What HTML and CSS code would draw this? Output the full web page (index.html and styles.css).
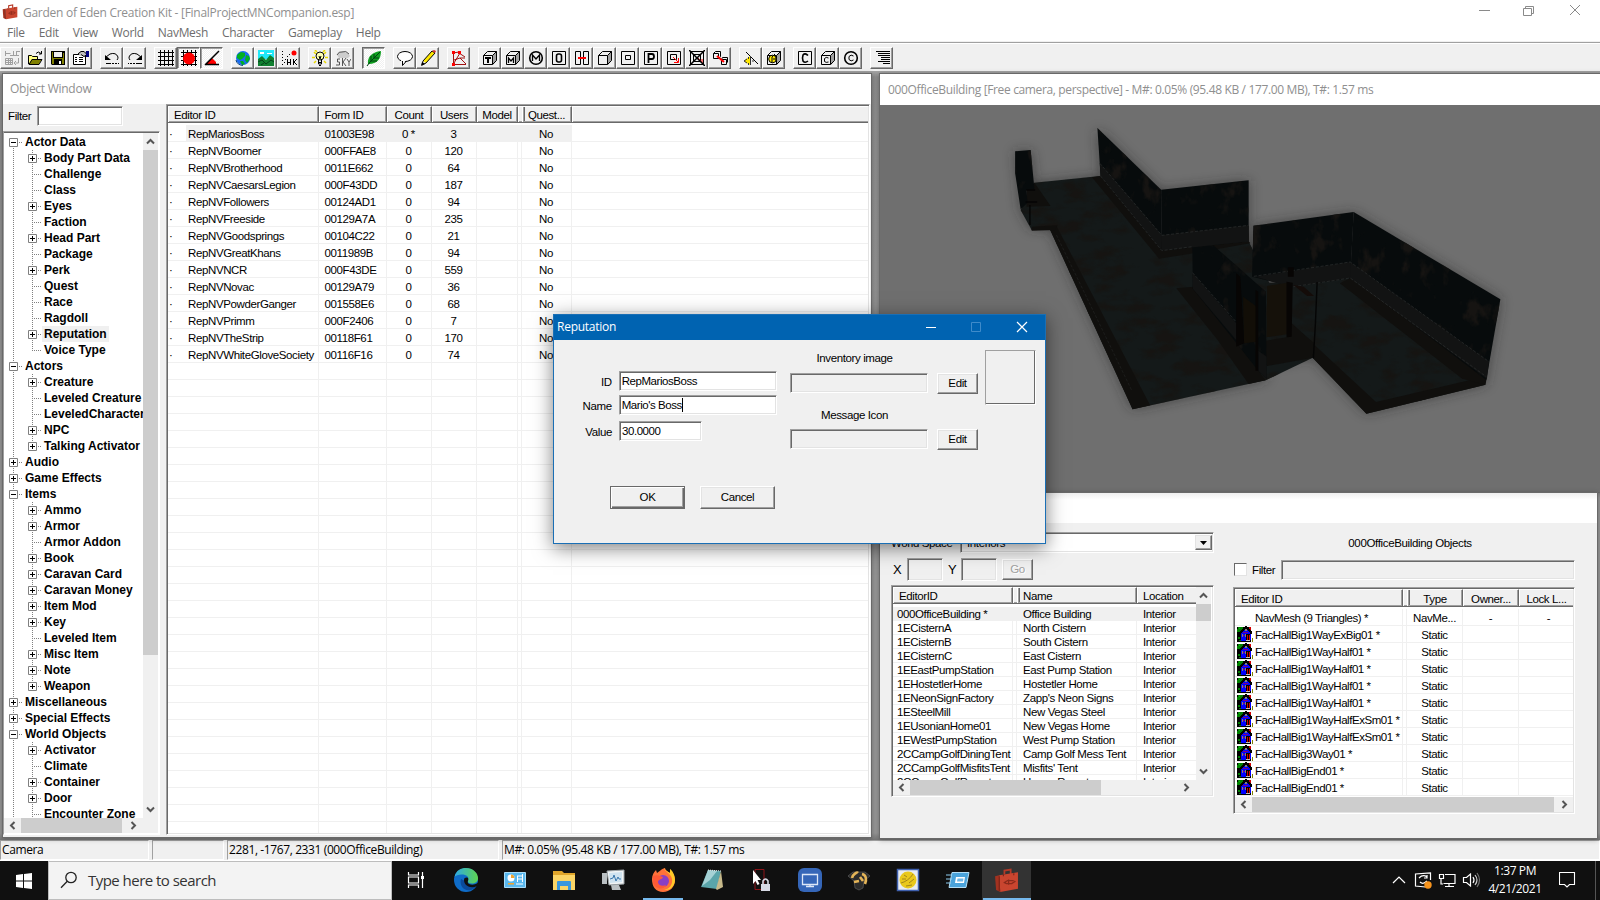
FILE: index.html
```html
<!DOCTYPE html>
<html lang="en">
<head>
<meta charset="utf-8">
<title>Garden of Eden Creation Kit</title>
<link rel="stylesheet" href="styles.css">
</head>
<body>
<div class="app">
  <header class="titlebar ui">
    <svg class="app-icon" width="16" height="16" viewBox="0 0 24 24"><use href="#suitcase"/></svg>
    <span class="app-title">Garden of Eden Creation Kit - [FinalProjectMNCompanion.esp]</span>
    <svg class="caption-buttons" width="110" height="22" viewBox="0 0 110 22" fill="none" stroke="#8a8a8a"><path d="M4 10.500h11M48.500 8.500h8v7h-8zM50.500 8.500v-2h8v7h-2M95 5l10 10M105 5l-10 10"/></svg>
  </header>
  <nav class="menu ui">
    <span>File</span><span>Edit</span><span>View</span><span>World</span><span>NavMesh</span><span>Character</span><span>Gameplay</span><span>Help</span>
  </nav>
  <div class="toolbar" id="toolbar"></div>

  <main class="mdi">
    <section class="window object-window">
      <h2 class="window-title ui">Object Window</h2>
      <div class="object-body">
        <aside class="tree-pane">
          <div class="filter-row"><span>Filter</span><span class="field"></span></div>
          <div class="tree-box">
            <div class="tree-main">
              <div class="tree" id="tree"></div>
              <div class="vscroll"><svg width="15" height="17"><use href="#up"/></svg><i class="thumb thumb-tree"></i><svg class="end" width="15" height="17"><use href="#down"/></svg></div>
            </div>
            <div class="hscroll"><svg width="17" height="15"><use href="#left"/></svg><i class="thumb thumb-tree-h"></i><svg class="tree-right" width="17" height="15"><use href="#right"/></svg></div>
          </div>
        </aside>
        <div class="list object-list">
          <div class="head cols-object"><b>Editor ID</b><b>Form ID</b><b class="c">Count</b><b class="c">Users</b><b class="c">Model</b><b></b><b class="c">Quest...</b><b></b></div>
          <div class="rows" id="objects"></div>
        </div>
      </div>
    </section>

    <section class="window render-window">
      <h2 class="window-title ui">000OfficeBuilding [Free camera, perspective] - M#: 0.05% (95.48 KB / 177.00 MB), T#: 1.57 ms</h2>
      <div class="viewport">
        <svg class="scene" width="540" height="320" viewBox="0 0 1568 960" preserveAspectRatio="none">
          <defs>
            <filter id="soft" x="-10%" y="-10%" width="120%" height="120%"><feGaussianBlur stdDeviation="18"/></filter>
            <filter id="grime" x="0" y="0" width="100%" height="100%" color-interpolation-filters="sRGB">
              <feTurbulence type="fractalNoise" baseFrequency="0.012 0.024" numOctaves="4" seed="6"/>
              <feColorMatrix values="0 0 0 0 0.085  0 0 0 0 0.080  0 0 0 0 0.070  0 4 0 0 -1.900"/>
              <feComposite in2="SourceGraphic" operator="in" result="n"/>
              <feMerge><feMergeNode in="SourceGraphic"/><feMergeNode in="n"/></feMerge>
            </filter>
            <filter id="peel" x="0" y="0" width="100%" height="100%" color-interpolation-filters="sRGB">
              <feTurbulence type="fractalNoise" baseFrequency="0.022 0.014" numOctaves="4" seed="11"/>
              <feColorMatrix values="0 0 0 0 0.085  0 0 0 0 0.078  0 0 0 0 0.070  0 5 0 0 -2.800"/>
              <feComposite in2="SourceGraphic" operator="in" result="n"/>
              <feMerge><feMergeNode in="SourceGraphic"/><feMergeNode in="n"/></feMerge>
            </filter>
          </defs>
          <path id="outline" filter="url(#soft)" fill="#222" opacity=".55" d="M102 124L147 120L158 218L350 198L341 54L526 239L780 211V394L794 404V347L1085 306L1511 568L1468 824L1122 911L966 743L834 768L829 811L443 898L203 358L150 360L118 300Z"/>
          <g filter="url(#grime)">
            <path fill="#141919" d="M158 218L350 198L526 420L780 394L830 500L966 743L829 811L443 898L203 358L150 360L118 300Z"/>
            <path fill="#141919" d="M830 520L1075 500L1468 824L1122 911L966 743L834 768Z"/>
          </g>
          <g fill="#100f0d">
            <path d="M325 202L350 198L535 420L780 394L785 400L620 430L520 446Z"/>
            <path d="M203 358L222 348L494 886L443 898Z"/>
            <path d="M570 535L620 530L750 700L829 811L780 822L690 690Z"/>
            <path d="M966 700L1150 876L1440 806L1468 824L1122 911L966 743Z"/>
            <path d="M1045 520L1075 505L1472 800L1468 824L1400 806Z"/>
            <path d="M158 218L205 288L135 290L135 240Z"/>
            <path d="M752 706L900 680L905 640L970 700L966 743L834 768Z"/>
            <path d="M150 350L225 346L218 360L150 362Z"/>
          </g>
          <g filter="url(#peel)" fill="#070b0c">
            <path d="M102 124L147 120L158 236L135 240L138 278L118 298L102 190Z"/>
            <path d="M341 54L526 239L528 422L350 198Z"/>
            <path d="M526 239L780 211V394L528 422Z"/>
            <path d="M794 347L1085 306L1075 505L910 530L790 500Z"/>
            <path d="M1085 306L1511 568L1470 810L1075 500Z"/>
            <path d="M616 350L830 545L832 806L808 782L745 700L618 536Z"/>
          </g>
          <g fill="#121313">
            <path d="M348 160L528 376V422L350 198Z"/><path d="M528 376L780 346V394L528 422Z"/>
            <path d="M800 500L1075 456V504L905 532Z"/><path d="M1075 456L1478 755L1472 806L1075 504Z"/>
            <path d="M617 488L744 640V690L618 536Z"/><path d="M808 722L832 740V806L808 782Z"/>
          </g>
          <g fill="none" stroke="#2c2f2f" stroke-width="2" stroke-dasharray="9 5">
            <path d="M348 160L528 376L780 346M350 198L528 422L616 410M795 499L1075 456L1478 755M910 530L1075 504L1470 800M617 488L744 636"/>
            <path d="M222 375L440 840" opacity=".6"/>
          </g>
          <path fill="#15110a" d="M834 528L895 518V672L832 682Z"/><path fill="#120e07" d="M764 560L804 590V695L766 700Z"/>
          <path fill="#070504" d="M744 490L756 500L767 700L744 710ZM890 515L908 518L905 680L890 682ZM894 472H911V500H894ZM800 540L808 545V782H800Z"/>
          <path fill="#140c09" d="M910 525L940 530L970 558L950 558Z"/>
          <path fill="none" stroke="#050505" stroke-width="4" d="M979 516L974 640L968 745M134 240H160M132 276H166M145 285V345"/>
        </svg>
      </div>
    </section>

    <section class="window cell-window">
      <div class="window-title"></div>
      <div class="cell-body">
        <div class="cell-left">
          <div class="space-row"><span>World Space</span><div class="combo"><span>Interiors</span><i class="combo-btn"><svg width="7" height="4"><path d="M0 0h7L3.500 4z"/></svg></i></div></div>
          <div class="xy-row"><span>X</span><span class="field off"></span><span class="y-label">Y</span><span class="field off"></span><span class="btn go">Go</span></div>
          <div class="list cell-list">
            <div class="cell-split">
              <div class="cell-table">
                <div class="head cols-cell"><b>EditorID</b><b></b><b>Name</b><b>Location</b></div>
                <div class="rows" id="cells"></div>
              </div>
              <div class="vscroll"><svg width="15" height="17"><use href="#up"/></svg><i class="thumb thumb-cell"></i><svg class="end" width="15" height="17"><use href="#down"/></svg></div>
            </div>
            <div class="hscroll"><svg width="17" height="15"><use href="#left"/></svg><i class="thumb thumb-cell-h"></i><svg class="cell-right-arrow" width="17" height="15"><use href="#right"/></svg></div>
          </div>
        </div>
        <div class="cell-right">
          <div class="refs-title">000OfficeBuilding Objects</div>
          <div class="refs-filter"><i class="check"></i><span>Filter</span><span class="field off"></span></div>
          <div class="list refs-list">
            <div class="head cols-refs"><b>Editor ID</b><b></b><b class="c">Type</b><b class="c">Owner...</b><b class="c">Lock L...</b></div>
            <div class="rows" id="refs"></div>
            <div class="hscroll"><svg width="17" height="15"><use href="#left"/></svg><i class="thumb thumb-refs-h"></i><svg class="end" width="17" height="15"><use href="#right"/></svg></div>
          </div>
        </div>
      </div>
    </section>
  </main>

  <footer class="status ui"><span>Camera</span><span></span><span>2281, -1767, 2331 (000OfficeBuilding)</span><span>M#: 0.05% (95.48 KB / 177.00 MB), T#: 1.57 ms</span></footer>

  <div class="taskbar ui">
    <div class="start"><svg width="18" height="18" viewBox="0 0 18 18" fill="#fff"><path d="M1 3l7-1v6.500H1zM9 2l8-1v7.500H9zM1 9.500h7V16l-7-1zM9 9.500h8V17l-8-1z"/></svg></div>
    <div class="search"><svg width="18" height="18" viewBox="0 0 18 18" fill="none" stroke="#222" stroke-width="1.300"><circle cx="11" cy="6.500" r="5.200"/><path d="M7.300 10.300L1 16.800"/></svg><span>Type here to search</span></div>
    <div class="apps">
      <span><svg width="24" height="24" viewBox="0 0 24 24" fill="none" stroke="#fff" stroke-width="1.200"><path d="M3.500 4v3h10V4M3.500 20v-3h10v3M3.500 9h10v6h-10zM17.500 4v16"/><path stroke-width="3" d="M17.500 8v3"/></svg></span>
      <span><svg width="26" height="26" viewBox="0 0 26 26"><defs><linearGradient id="eg" x1="0" y1="0" x2="1" y2="0"><stop offset="0" stop-color="#2ea9e6"/><stop offset="1" stop-color="#5fd44f"/></linearGradient></defs><circle cx="13" cy="13" r="12" fill="#0f6cc8"/><path fill="#0b4a9b" d="M8 12c-2 6 3 13 10 11 3-1 5-3 6-5-4 2-9 2-10-3z"/><path fill="#101010" d="M11 13c0-3 4-3 4.500-1 .3 1.500-1.500 2.500-.5 4 1.500 2 6 2.500 9.500 0l1.500-2-2 5c-6 3-13 0-13-6z"/><path fill="url(#eg)" d="M1.500 10C3 3 8 1 13 1c7 0 12 5 12 10 0 4-3 5.500-6 5.500-3 0-4.500-1-4-2.500 1-1 1-5-3-6C8 7 3 8 1.500 10z"/></svg></span>
      <span><svg width="24" height="24" viewBox="0 0 24 24"><path fill="#58b7ee" stroke="#a8dcf8" d="M1.500 4.500h21v15h-21z"/><circle cx="8" cy="10" r="3.500" fill="#fff"/><path fill="#f2a530" d="M8 10V6.500a3.500 3.500 0 0 1 3.500 3.500zM5 15h6v1.500H5z"/><path fill="none" stroke="#fff" d="M14 8h6M14 11h6M13 16h7M14.500 8v6M19.500 6v8"/></svg></span>
      <span><svg width="24" height="24" viewBox="0 0 24 24"><path fill="#e0a52a" d="M1 3h9l2 2h11v4H1z"/><path fill="#fbd566" d="M1 7h22v15H1z"/><path fill="#3a97dd" d="M5 22v-8q0-1 1-1h12q1 0 1 1v8h-3v-4H8v4z"/></svg></span>
      <span><svg width="24" height="24" viewBox="0 0 24 24"><path fill="#b9bfc2" d="M1 5h5v11H1zM10 17h8l2 5h-9z"/><path fill="#f1f4f5" stroke="#9aa2a6" d="M6 3l17-1v14l-15 1z"/><path fill="#cfe3f0" d="M8 5l13-1v10l-12 1z"/><path fill="none" stroke="#3a78ad" d="M9 11l3-1 1-3 2 6 2-4 1 2h2"/></svg></span>
      <span class="running"><svg width="26" height="26" viewBox="0 0 26 26"><path fill="#ff7139" d="M2 12C2 8 4 5 6 3l1 3 4-3c1-1 3-2 4-2 0 2 2 3 5 5l1-2c3 3 4 6 4 9 0 7-5 12-12 12S2 20 2 12z"/><path fill="#ffca28" d="M14 1c0 3 7 5 8 11s-3 10-8 11c7 1 11-5 11-10S22 3 20 2l0 4C18 5 15 3 14 1z"/><circle cx="13" cy="14" r="6" fill="#8a3fc4"/><path fill="#ff5a36" d="M3 9c4-2 7 0 10 1-1 3-5 2-5 5s4 5 8 3c-2 6-12 4-13-3z"/></svg></span>
      <span><svg width="24" height="24" viewBox="0 0 24 24"><path fill="#5aa5aa" d="M8 2l13 1-4 18-16-2z"/><path fill="#a5d2d5" d="M8 2l9 1-7 9-8 6z"/><path fill="#c7b98a" d="M21 3l2 16-6 3-1-1z"/><path stroke="#e9e9e9" stroke-dasharray="1 1" d="M8 2l13 1"/></svg></span>
      <span><svg width="24" height="24" viewBox="0 0 24 24"><path fill="none" stroke="#8e1418" d="M6 1.500h9v20H6z"/><path fill="#fff" d="M4 2l8 10-3.500 0 2 4-2 1-2-4L4 16z"/><path fill="#d7d9e4" d="M12 16h9v7h-9z"/><path fill="none" stroke="#d7d9e4" stroke-width="1.600" d="M14 16v-3q2.500-4 5 0v3"/></svg></span>
      <span><svg width="26" height="26" viewBox="0 0 26 26"><rect x="1" y="1" width="24" height="24" rx="6" fill="#3566b8"/><path fill="none" stroke="#dce6f7" stroke-width="1.300" d="M5.500 7.500h15v10h-15zM13 17v2M9 19.500h8"/></svg></span>
      <span><svg width="24" height="24" viewBox="0 0 24 24"><path fill="#2c2c2c" stroke="#666" stroke-width=".6" d="M1 8l5-4h12l5 4-6 5-1 7-4 2-4-2-1-7z"/><path fill="none" stroke="#e5b558" stroke-width="2.600" d="M5 10c1-4 5-6 6-5M7 14l5-1M15 6c4 1 5 5 3 10M13 9l3 4"/></svg></span>
      <span><svg width="24" height="24" viewBox="0 0 24 24"><path fill="#e7ebf2" stroke="#3f60ae" stroke-width="1.500" d="M1.500 1.500h21v21h-21z"/><circle cx="12" cy="12" r="8.500" fill="#e9c81d"/><path fill="none" stroke="#a4861a" d="M5 15c4-1 9-4 12-9M8 7l3 2M6 11h4M13 15l5-4M10 18l6-1"/></svg></span>
      <span><svg width="24" height="24" viewBox="0 0 24 24"><path fill="#4aa3db" stroke="#b4def5" d="M6 4.500h17l-3 15H3z"/><path fill="#fff" d="M10 9h9l-1 6H9z"/><path fill="#6db6e6" d="M11.500 10.500h6l-.5 3h-6z"/><path stroke="#8fcdf0" d="M0 7h6M0 11h6M0 15h5"/></svg></span>
      <span class="running active"><svg width="25" height="25" viewBox="0 0 24 24"><g id="suitcase"><path fill="none" stroke="#b53a28" stroke-width="1.700" d="M10 6V2.500l6-1V6"/><path fill="#c9452f" d="M5 7l18-3v16L6 23z"/><path fill="#a23220" d="M1 8l4-1 1 16-4-2z"/><path fill="none" stroke="#7b2115" d="M5 8v14M9 6v2M19 5v2"/><path fill="none" stroke="#8a2a1b" stroke-width="1.200" d="M10 14l3-2 5 0 2 1-3 2-5 0zM14 11v5"/></g></svg></span>
    </div>
    <div class="tray">
      <svg width="100" height="24" viewBox="0 0 100 24" fill="none" stroke="#fff" stroke-width="1.200"><path d="M1 15l6-6 6 6M38.500 12V5l-15 1v12l10 1M27 10q4-4 8-1M35 7v3h-3M35 13q-4 4-7 1M47.500 6.500v4h4v-4zM49 10v6h2M53 6.500h10v9H51.500M57 16v3M53 18.500h9M71.500 9.500h3l4-3.500v12l-4-3.500h-3zM81 9q2 3 0 6"/><path d="M83 7q4 5 0 10" opacity=".8"/><path d="M85 5q5 7 0 14" opacity=".4"/><circle cx="36" cy="17" r="3.700" fill="#f7941d" stroke="none"/></svg>
    </div>
    <div class="clock"><span>1:37 PM</span><span>4/21/2021</span></div>
    <div class="notice"><svg width="17" height="17" viewBox="0 0 17 17" fill="none" stroke="#fff" stroke-width="1.100"><path d="M.5 1.500h15v12h-5l-2.500 2.500-2.500-2.500h-5z"/></svg></div>
  </div>

  <section class="dialog">
    <header class="dialog-title ui"><span>Reputation</span><svg width="110" height="24" viewBox="0 0 110 24" fill="none" stroke="#fff"><path d="M3 12.500h10"/><path stroke="#3f8bca" d="M48.500 7.500h9v9h-9z"/><path stroke-width="1.200" d="M94 7l10 10M104 7L94 17"/></svg></header>
    <div class="dialog-body">
      <div class="d-left">
        <div class="d-row"><label>ID</label><span class="field">RepMariosBoss</span></div>
        <div class="d-row name"><label>Name</label><span class="field">Mario's Boss<i class="caret"></i></span></div>
        <div class="d-row value"><label>Value</label><span class="field">30.0000</span></div>
        <div class="d-actions"><span class="btn ok">OK</span><span class="btn">Cancel</span></div>
      </div>
      <div class="d-mid">
        <div class="d-caption">Inventory image</div>
        <div class="d-pick"><span class="field off"></span><span class="btn">Edit</span></div>
        <div class="d-caption lower">Message Icon</div>
        <div class="d-pick"><span class="field off"></span><span class="btn">Edit</span></div>
      </div>
      <div class="d-preview"></div>
    </div>
  </section>
</div>

<svg width="0" height="0" class="defs">
  <defs>
    <path id="up" d="M4 10.500l3.500-3.500 3.500 3.500" fill="none" stroke="#555" stroke-width="2"/>
    <path id="down" d="M4 6.500l3.500 3.500 3.500-3.500" fill="none" stroke="#555" stroke-width="2"/>
    <path id="left" d="M10.500 4L7 7.500 10.500 11" fill="none" stroke="#555" stroke-width="2"/>
    <path id="right" d="M6.500 4L10 7.500 6.500 11" fill="none" stroke="#555" stroke-width="2"/>
    <g id="house" shape-rendering="crispEdges">
      <path fill="#000" d="M0 1h14v15H0z"/><path fill="#008000" d="M1 1h5v2H1zM0 3h5v3H0zM1 11h2v2H1zM2 14h3v1H2z"/>
      <path fill="#00c000" d="M2 2h1v1H2z"/><path fill="#d00000" d="M12 1h2v4h-2z"/><path fill="#000" d="M3 6l5-6h1l6 6v2H3z"/>
      <path fill="#0000ff" d="M5 6l3-3h1l4 3v2h1v6h-1v-6H9v7H4V7h1z"/><path fill="#808080" d="M8 3h2v2H8zM5 8h1v3H5zM8 8h1v3H8z"/><path fill="#800080" d="M6 6h5v1H6zM6 9h2v1H6z"/>
      <path fill="#d00000" d="M10 9h3v5h-3z"/><path fill="#000" d="M11 9h1v5h-1z"/><path fill="#c0c0c0" d="M9 14h4v1H9z"/><path fill="#808000" d="M15 12h1v4h-1z"/>
    </g>
  </defs>
</svg>
<script src="app.js"></script>
</body>
</html>
```

FILE: styles.css
```css
* { box-sizing: border-box; }
body { margin: 0; background: #f0f0f0; overflow: hidden; }
b, h2 { font-weight: normal; margin: 0; }
i { font-style: normal; }
svg { display: block; flex: none; }
.defs { position: absolute; }

.app {
  position: relative;
  display: flex;
  flex-direction: column;
  width: 1600px;
  height: 900px;
  overflow: hidden;
  font: 11.5px "Liberation Sans", Arial, sans-serif;
  letter-spacing: -0.38px;
  color: #000;
  white-space: nowrap;
}
.ui { font-family: "Open Sans", "Noto Sans", sans-serif; font-size: 12px; letter-spacing: -0.27px; }

/* Main caption and menu */
.titlebar { display: flex; align-items: center; height: 22px; flex: none; background: #fff; color: #8f8f8f; padding-left: 2px; }
.app-icon { margin-top: 1px; }
.app-title { margin-left: 5px; margin-top: 2px; }
.caption-buttons { margin-left: auto; margin-right: 15px; }
.menu { display: flex; height: 19px; flex: none; background: #fff; color: #6d6d6d; padding-left: 7px; gap: 14px; line-height: 21px; letter-spacing: -0.31px; }

/* Toolbar */
.toolbar { display: flex; gap: 8px; height: 30px; flex: none; padding-top: 4px; background: #f0f0f0; border-top: 1px solid #f0f0f0; box-shadow: inset 0 1px #a0a0a0, inset 0 2px #fff; }
.tool-group { display: flex; }
.tool {
  width: 23px; height: 22px; padding: 2px 0 0 3px; margin-top: 1px;
  border: 1px solid; border-color: #fff #696969 #696969 #fff;
  box-shadow: inset -1px -1px #a0a0a0;
}
.tool svg { margin-left: -0.5px; }
.tool.down { border-color: #696969 #fff #fff #696969; box-shadow: inset 1px 1px #a0a0a0; background: repeating-conic-gradient(#fff 0 25%, #f0f0f0 0 50%) 0 0 / 2px 2px; }

/* Child windows */
.mdi { position: relative; height: 769px; flex: none; background: linear-gradient(#a5a5a5, #8e8e8e 6px, #989898 50%, #989898 762px, #777); }
.window { position: absolute; display: flex; flex-direction: column; background: #f0f0f0; border: 1px solid #696969; box-shadow: 0 1px 5px rgba(0, 0, 0, .3); overflow: hidden; }
.window-title { height: 30px; flex: none; background: #fff; color: #8f8f8f; padding-left: 7px; line-height: 30px; }
.object-window { left: 2px; top: 2px; width: 870px; height: 765px; }
.render-window { left: 879px; top: 2px; width: 730px; height: 420px; }
.render-window .window-title { height: 31px; line-height: 31px; letter-spacing: -0.355px; padding-left: 8px; }
.cell-window { left: 879px; top: 421px; width: 719px; height: 347px; }
.cell-window .window-title { background: linear-gradient(#eee, #fff 7px); }

.field { display: block; background: #fff; border: 1px solid; border-color: #a0a0a0 #fff #fff #a0a0a0; box-shadow: inset 1px 1px #696969, inset -1px -1px #e3e3e3; }
.field.off { background: #f0f0f0; }
.btn { display: block; text-align: center; background: #f0f0f0; border: 1px solid; border-color: #fff #696969 #696969 #fff; box-shadow: inset -1px -1px #a0a0a0, inset 1px 1px #e3e3e3; }

/* Scroll bars */
.vscroll { width: 15px; flex: none; display: flex; flex-direction: column; background: #f0f0f0; }
.hscroll { height: 15px; flex: none; display: flex; background: #f0f0f0; }
.end { margin-top: auto; }
.hscroll .end { margin-top: 0; margin-left: auto; }
.tree-right { margin-left: 3px; }
.cell-right-arrow { margin-left: 77px; }
.thumb { display: block; background: #cdcdcd; flex: none; }
.thumb-tree { height: 505px; }
.thumb-tree-h { width: 101px; }
.thumb-cell { height: 17px; }
.thumb-cell-h { width: 191px; }
.thumb-refs-h { width: 302px; }

/* Object window */
.object-body { display: flex; flex: 1; min-height: 0; }
.tree-pane { width: 157px; display: flex; flex-direction: column; }
.filter-row { display: flex; align-items: center; height: 27px; padding: 0 37px 4px 5px; flex: none; }
.filter-row .field { width: 86px; height: 20px; margin-left: auto; }
.tree-box { flex: 1; min-height: 0; margin-bottom: 2px; display: flex; flex-direction: column; background: #fff; border: 1px solid; border-color: #a0a0a0 #fff #fff #a0a0a0; box-shadow: inset 0 1px #696969; padding: 1px 1px 1px 0; }
.tree-main { display: flex; flex: 1; min-height: 0; }
.tree { width: 139px; overflow: hidden; font-weight: bold; font-size: 12px; letter-spacing: 0; padding-top: 1px; }
.node {
  --v: repeating-linear-gradient(#808080 0 1px, transparent 1px 2px);
  --h: repeating-linear-gradient(90deg, #808080 0 1px, transparent 1px 2px);
  display: flex; align-items: center; height: 16px; padding-left: 5px;
  background: var(--v) 9px 0 / 1px 100% no-repeat, var(--h) 15px 8px / 4px 1px no-repeat;
}
.node.first { background-position: 9px 8px, 15px 8px; }
.node.child { padding-left: 24px; background: var(--v) 9px 0 / 1px 100% no-repeat, var(--v) 28px 0 / 1px 100% no-repeat, var(--h) 28px 8px / 9px 1px no-repeat; }
.node.child.last { background-size: 1px 100%, 1px 8px, 9px 1px; }
.node svg, .node .none { width: 9px; height: 9px; flex: none; }
.node span { margin-left: 5px; padding: 0 2px; line-height: 16px; }
.node.sel span { background: #f0f0f0; }

/* Lists */
.list { display: flex; flex-direction: column; background: #fff; border: 1px solid; border-color: #a0a0a0 #fff #fff #a0a0a0; box-shadow: inset 1px 1px #696969, inset -1px -1px #e3e3e3; padding: 1px; overflow: hidden; }
.head { display: grid; flex: none; height: 17px; background: #f0f0f0; border-bottom: 1px solid #696969; }
.head b { line-height: 16px; padding-left: 5px; overflow: hidden; border-left: 1px solid #fff; border-top: 1px solid #fff; border-right: 1px solid #696969; box-shadow: inset -1px -1px #a0a0a0; }
.head b.c, .row .c { padding-left: 0; text-align: center; }
.head b:last-child { border-right: 0; box-shadow: inset 0 -1px #a0a0a0; }
.rows { flex: 1; min-height: 0; overflow: hidden; padding-top: 2px; }
.row { display: grid; height: 17px; }
.row span { border-right: 1px solid #f0f0f0; border-bottom: 1px solid #f0f0f0; line-height: 18px; overflow: hidden; display: block; }
.row span:last-child { border-right: 0; }

.object-list { flex: 1; margin: 0 1px 2px 6px; }
.cols-object { grid-template-columns: 150.500px 68px 45px 45px 41px 4px 50px 1fr; }
.object-list .row span:first-child { display: flex; padding-left: 1px; }
.object-list .row i { width: 19px; flex: none; }
.object-list .row span:nth-child(2) { padding-left: 6px; }
.object-list .sel { background: linear-gradient(#f0f0f0, #f0f0f0) 18px 0 / 385px 17px no-repeat; }

/* Cell view */
.cell-body { display: flex; flex: 1; min-height: 0; padding-left: 11px; }
.cell-left { width: 323px; padding-top: 9px; }
.space-row { display: flex; align-items: center; justify-content: space-between; height: 21px; }
.combo { width: 254px; height: 21px; display: flex; justify-content: space-between; padding: 2px 1px 2px 2px; background: #fff; border: 1px solid; border-color: #a0a0a0 #fff #fff #a0a0a0; box-shadow: inset 1px 1px #696969, inset -1px -1px #e3e3e3; }
.combo span { padding-left: 4px; line-height: 17px; }
.combo-btn { width: 17px; background: #f0f0f0; border: 1px solid; border-color: #e3e3e3 #696969 #696969 #e3e3e3; box-shadow: inset -1px -1px #a0a0a0; display: flex; align-items: center; justify-content: center; }
.xy-row { display: flex; align-items: center; height: 22px; margin-top: 5px; padding-left: 2px; }
.xy-row .field { width: 36px; height: 23px; margin-left: 5px; }
.xy-row span:first-child { width: 9px; font-size: 13px; }
.y-label { margin-left: 5px; width: 8px; font-size: 13px; }
.go { width: 31px; height: 21px; line-height: 19px; margin-left: 5px; color: #a0a0a0; text-shadow: 1px 1px #fff; }
.cell-list { width: 323px; height: 212px; margin-top: 5px; }
.cell-list .head { height: 17px; }
.cell-list .head b { line-height: 17px; }
.cell-split { display: flex; flex: 1; min-height: 0; }
.cell-table { width: 303px; display: flex; flex-direction: column; }
.cols-cell { grid-template-columns: 120px 4px 120px 1fr; }
.cell-list .rows { padding-top: 3px; }
.cell-list .row { height: 14px; }
.cell-list .row span { line-height: 14px; padding-left: 6px; }
.cell-list .row span:first-child { padding-left: 4px; }
.cell-list .row span:nth-child(2) { padding: 0; }
.cell-list .row.sel { background: #f0f0f0; }

.cell-right { width: 342px; margin-left: 19px; padding-top: 9px; }
.refs-title { text-align: center; line-height: 22px; padding-left: 12px; height: 27px; letter-spacing: -0.35px; }
.refs-filter { display: flex; align-items: center; height: 21px; padding-left: 1px; }
.check { width: 13px; height: 13px; background: #fff; border: 1px solid; border-color: #696969 #e3e3e3 #e3e3e3 #696969; }
.refs-filter span { margin-left: 5px; }
.refs-filter .field { width: 294px; height: 20px; margin-left: auto; }
.refs-list { height: 227px; margin-top: 7px; }
.refs-list .head { height: 18px; }
.refs-list .head b { line-height: 18px; }
.cols-refs { grid-template-columns: 168px 4px 56px 56px 1fr; }
.refs-list .row span:first-child { display: flex; padding-left: 2px; gap: 1px; letter-spacing: -0.45px; }
.refs-list .row svg { width: 17px; height: 17px; }
.refs-list .row .c:last-child { padding-left: 5px; }
.cell-right .hscroll { margin-top: 1px; }

/* Status bar */
.status { display: flex; gap: 3px; height: 21px; flex: none; background: #f0f0f0; border-bottom: 1px solid #fff; letter-spacing: -0.39px; }
.status span { border: 1px solid; border-color: #a0a0a0 #fff #fff #a0a0a0; line-height: 18px; padding-left: 1px; }
.status span:nth-child(1) { width: 149px; }
.status span:nth-child(2) { width: 72px; }
.status span:nth-child(3) { width: 272px; }
.status span:nth-child(4) { flex: 1; }

/* Taskbar */
.taskbar { display: flex; flex: 1; background: #101010; color: #fff; }
.start { width: 48px; display: flex; align-items: center; justify-content: center; }
.search { width: 344px; background: #f3f3f3; border: 1px solid #bdbdbd; color: #333; display: flex; align-items: center; padding: 0 0 2px 11px; font-size: 15px; letter-spacing: -0.53px; }
.search span { margin-left: 10px; }
.apps { display: flex; }
.apps span { width: 49.200px; display: flex; align-items: center; justify-content: center; padding-bottom: 1px; }
.apps .running { background: linear-gradient(#76b9ed, #76b9ed) center bottom / 40px 2px no-repeat; }
.apps .active { background: linear-gradient(#76b9ed, #76b9ed) center bottom / 48px 2px no-repeat, #333; }
.tray { margin-left: auto; display: flex; align-items: center; padding-bottom: 2px; }
.clock { width: 72px; margin-left: -13px; margin-right: 8px; text-align: center; line-height: 18px; padding-top: 1px; display: flex; flex-direction: column; letter-spacing: -0.4px; }
.notice { width: 37px; margin-right: 4px; border-right: 1px solid #555; padding: 10px 0 0; }

/* Render view */
.viewport { flex: 1; background: #6f6f6f; padding: 5px 0 0 100px; }
.scene { overflow: visible; }

/* Reputation dialog */
.dialog { position: absolute; left: 553px; top: 314px; width: 493px; height: 230px; background: #f0f0f0; border: 1px solid #1a6fb5; box-shadow: 0 4px 18px rgba(0, 0, 0, .5); }
.dialog-title { display: flex; justify-content: space-between; height: 25px; background: #0063b1; color: #fff; line-height: 24px; padding: 0 12px 0 3px; letter-spacing: -0.25px; }
.dialog-body { display: flex; height: 203px; }
.d-left { width: 223px; padding-top: 31px; }
.d-row { display: flex; height: 20px; }
.d-row label { width: 58px; margin-right: 7px; text-align: right; padding-top: 5px; }
.d-row .field { width: 159px; height: 20px; line-height: 18px; padding-left: 2px; display: flex; letter-spacing: -0.45px; }
.d-row.name { margin-top: 4px; }
.d-row.value { margin-top: 6px; }
.d-row.value .field { width: 83px; }
.caret { width: 1px; height: 14px; background: #000; margin-top: 2px; }
.d-actions { display: flex; gap: 15px; margin: 45px 0 0 56px; }
.d-actions .btn { width: 75px; height: 23px; line-height: 21px; }
.btn.ok { border-color: #696969; box-shadow: inset 1px 1px #fff, inset -1px -1px #696969, inset -2px -2px #a0a0a0; }
.d-mid { width: 189px; margin-left: 13px; padding-top: 10px; }
.d-caption { width: 129px; text-align: center; height: 23px; line-height: 17px; }
.d-caption.lower { line-height: 19px; }
.d-pick { display: flex; gap: 9px; height: 33px; }
.d-pick .field { width: 138px; height: 20px; }
.d-pick .btn { width: 41px; height: 21px; line-height: 18px; }
.d-preview { width: 51px; height: 55px; margin: 10px 0 0 6px; border: 1px solid; border-color: #a0a0a0 #fff #fff #a0a0a0; box-shadow: inset -1px -1px #696969; }
```

FILE: app.js
```js
const el = (id) => document.getElementById(id);

// Toolbar: [pressed, 16x16 drawing]
const cube = '<path fill="#a0a0a0" d="M11 5l4-4v9l-4 5z"/><path fill="#f0f0f0" stroke="#000" d="M1.500 5.500h9v9h-9z"/><path fill="none" stroke="#000" d="M1.500 5.500l4-4h9v9l-4 4M10.500 5.500l4-4"/>';
const box = '<path fill="none" stroke="#000" d="M1.500 1.500h13v13h-13z"/>';
const ring = '<circle cx="8" cy="8" r="6.300" fill="none" stroke="#000" stroke-width="1.600"/>';
const k = (d, c = '#000', w = 1) => `<path fill="none" stroke="${c}" stroke-width="${w}" d="${d}"/>`;
const f = (d, c = '#000') => `<path fill="${c}" d="${d}"/>`;
const grid = k('M0 2.500h16M0 6.500h16M0 10.500h16M0 14.500h16M2.500 0v16M6.500 0v16M10.500 0v16M14.500 0v16');
const groups = [
  [
    [0, k('M1.500 3.500h5M1.500 1v5M6 5.500h9M9.500 1v4M12 1.500h4M12.500 1v4M1.500 8.500h7v6h-7zM1 10.500h8M1 12.500h8M4.500 8v7M6.500 8v7M14.500 8v5h-3M12 11l-2 2 2 2', '#a0a0a0')],
    [0, f('M1 5h4l1 1h5v3H5l-3 5H1z', '#ffff80') + f('M5 9h10l-3 5H2z', '#808000') + k('M1.500 14V5.500h3l1 1h5V9M2 14.500h10l3-5H5l-3 5M9 3.500q2-3 5 0M14.500 1v3H12')],
    [0, f('M1 1h14v14H2l-1-1z') + f('M2 2h1v11H2zM13 3h1v11h-1zM3 8h10v1H3z', '#808000') + f('M4 2h8v5H4z', '#f0f0f0') + f('M9 11h2v3H9z', '#fff') + f('M2 9h2v5H2zM12 9h2v5h-2z', '#808000')],
    [0, f('M1 5h11v10H1z', '#fff') + k('M.5 4.500h12v10H.5zM2 7.500h2M6 7.500h4M2 9.500h2M6 9.500h4M2 11.500h2M6 11.500h4') + f('M5 3l3-2h4l2 3-3 3-2-2-2 1z', '#c0c0c0') + k('M5 4l3-2.500h3l3 3-3 2-3-2') + f('M13 1h3v6h-3z', '#000080')],
  ],
  [
    [0, k('M2 9.500q-1-3 4-5.500 6-2 8 3 0 2-1 3') + f('M1 5v5h6z') + f('M8 13h2v1H8zM11 13h2v1h-2zM14 13h1v1h-1zM2 13h5v1H2z')],
    [0, k('M14 9.500q1-3-4-5.500-6-2-8 3 0 2 1 3') + f('M15 5v5H9z') + f('M1 13h1v1H1zM3 13h2v1H3zM6 13h2v1H6zM9 13h6v1H9z')],
  ],
  [
    [0, grid],
    [1, grid + '<circle cx="8" cy="8.500" r="6" fill="red"/>'],
    [1, f('M1 15l7-7 4 4v3z', 'red') + k('M1 14.500h14M1 15L15 1', '#000', 1.500)],
  ],
  [
    [0, '<circle cx="8" cy="8" r="7" fill="#1a6cf0"/>' + f('M2 5l4-3 4 1 0 3-3 3-2 1-3-2zM11 5l3 1 1 3-3 4-2-3zM5 11l3 0 2 3-3 1z', '#00b020') + k('M1 10q1 5 7 5.500', '#004080')],
    [0, f('M0 0h16v9H0z', '#20e8f8') + f('M0 9l4-3 4 4 4-5 4 3v8H0z', '#108030') + f('M2 2h4v2H2zM9 3h5v1H9z', '#fff') + k('M0 12l4-2 4 4 5-4 3 2M3 15l3-2', '#054018')],
    [0, f('M1 1h1v1H1zM1 4h1v1H1zM1 7h1v1H1zM1 10h1v1H1zM1 14h1v1H1zM3 12h1v1H3zM4 9h1v1H4zM6 6h1v1H6zM8 4h1v1H8z') + '<circle cx="13" cy="3" r="2.500" fill="red"/>' + k('M6.500 9v6M9.500 9v6M7 12.500h3M12.500 9v6M16 9l-3 3 3 3')],
  ],
  [
    [0, k('M2 2l2 2M14 2l-2 2M0 7.500h3M13 7.500h3M2 13l2-2M14 13l-2-2M3 0l2 2M13 0l-2 2', '#e8d800', 1.500) + '<circle cx="8" cy="6" r="4" fill="#ffffb0" stroke="#000"/>' + k('M6.500 10v4h3v-4M6 12.500h4M7 15.500h2M7 6l1 3 1-3')],
    [0, f('M2 5l2-3 4-1 5 2 2 3-2 2H4z', '#ccc') + k('M2 5q2-4 5-3 4-2 7 2M5 9H2.500v3h2v3H1M7.500 8v8M11 8l-3 4 3 4M12 9l2 3 2-3M14 12v4', '#555')],
  ],
  [[1, f('M2 14C1 7 6 2 15 1c0 8-4 13-12 13z', '#10a020') + k('M1 16l3-4L14 2M5 11V6M8 8V4M5 11h6M8 8h5', '#004010')]],
  [
    [0, '<ellipse cx="8" cy="6.500" rx="7.500" ry="5" fill="#fff" stroke="#000"/>' + f('M4 10h5l-4 6z', '#fff') + k('M5.500 11v4.500l4-4.500')],
    [0, f('M3 11l9-10 3 2-9 10z', '#ffe800') + k('M3 11l9-10 3 2-9 10-4 2z') + f('M1 16l1-4 3 2z') + f('M12 1l3 2 1-2-2-1z', '#d03030')],
  ],
  [[0, k('M2.500 1v13.500M2 3l6-1M8 3l6 4M3 14.500h12M3 13l6-10M3 10l6-2 6 6M9 8l5 0', '#a01010') + f('M1 1h3v3H1zM7 1h3v3H7z', 'red') + f('M1 13h3v3H1z', 'red')]],
  [
    [0, cube + f('M3 7h6v2H7v4H5V9H3z')],
    [0, cube + k('M3.500 13V8l2.500 3 2.500-3v5', '#000', 1.300)],
    [0, ring + k('M4.500 11V5L8 9l3.500-4v6', '#000', 1.300)],
    [0, box + '<rect x="5.500" y="4" width="5" height="8" rx="2" fill="none" stroke="#000" stroke-width="1.600"/>'],
    [0, k('M1.500 1.500h5v13h-5zM9.500 1.500h5v13h-5z') + k('M4 8h8', 'red', 2)],
    [0, cube],
    [0, box + k('M5.500 5.500h5v4h-5z')],
    [0, box + k('M5.500 13V4H9q2 0 2 2.500T9 9H6', '#000', 1.800)],
    [0, box + k('M4.500 4.500h6v5h-6z') + k('M7 7l5 5M12.500 8v4.500H8', 'red')],
    [0, box + k('M4.500 4.500h7v7h-7z') + k('M9 8l4 5V9', 'red') + k('M0 0l16 16M16 0L0 16', '#000', 1.500)],
    [0, k('M1.500 3.500h5v5h-5zM1.500 3.500l2-2h5v5l-2 2M9.500 9.500h5v5h-5zM9.500 9.500l1-2h5v5') + k('M5 6l7 6', 'red', 2)],
  ],
  [
    [0, k('M3 2l12 12') + f('M2 10l5-4v9l-5-3z', '#ffe800') + k('M7.500 6v9M4 9l-3 2 3 2M9 11h2M5.500 7v2M5.500 13v2', '#333')],
    [0, cube + '<circle cx="6.500" cy="9" r="3.800" fill="#ffe800" stroke="#000"/>' + k('M9 4l-3 3v6M7 9h3')],
  ],
  [
    [0, box + k('M11 5.500Q8 2.500 6 5q-1 3 0 6 2 2.500 5 0', '#000', 1.600)],
    [0, cube + k('M8.500 8Q6 6.500 4.500 8.500v3Q6 13 8.500 12')],
    [0, ring + k('M10.500 6Q8 4 6 6.500v3Q8 12 10.500 10')],
  ],
  [[0, k('M2 1.500h14M4 3.500h12M4 5.500h12M7 7.500h9M7 9.500h9M4 11.500h12M9 13.500h7')]],
];
el('toolbar').innerHTML = groups.map((g) =>
  `<div class="tool-group">${g.map(([on, art]) => `<span class="tool${on ? ' down' : ''}"><svg width="16" height="16" viewBox="0 0 16 16">${art}</svg></span>`).join('')}</div>`
).join('');

// Tree: leading "+" marks a collapsed branch, "-" an open one
const tree = [
  ['-Actor Data', '+Body Part Data', 'Challenge', 'Class', '+Eyes', 'Faction', '+Head Part', 'Package', '+Perk', 'Quest', 'Race', 'Ragdoll', '+Reputation', 'Voice Type'],
  ['-Actors', '+Creature', 'Leveled Creature', 'LeveledCharacter', '+NPC', '+Talking Activator'],
  ['+Audio'], ['+Game Effects'],
  ['-Items', '+Ammo', '+Armor', 'Armor Addon', '+Book', '+Caravan Card', '+Caravan Money', '+Item Mod', '+Key', 'Leveled Item', '+Misc Item', '+Note', '+Weapon'],
  ['+Miscellaneous'], ['+Special Effects'],
  ['-World Objects', '+Activator', 'Climate', '+Container', '+Door', 'Encounter Zone'],
];
const last = new Set(['Voice Type', '+Talking Activator', '+Weapon']);
el('tree').innerHTML = tree.map((branch, b) => branch.map((text, n) => {
  const mark = /^[+-]/.test(text) ? text[0] : '';
  const name = mark ? text.slice(1) : text;
  const cls = ['node', n ? 'child' : '', !b && !n ? 'first' : '', last.has(text) ? 'last' : '', name === 'Reputation' ? 'sel' : ''].join(' ');
  const sign = mark ? `<svg viewBox="0 0 9 9"><path fill="#fff" stroke="#808080" d="M.5.5h8v8h-8z"/><path stroke="#000" d="M2 4.500h5${mark === '+' ? 'M4.500 2v5' : ''}"/></svg>` : '<i class="none"></i>';
  return `<div class="${cls}">${sign}<span>${name}</span></div>`;
}).join('')).join('');

const objects = [
  ['RepMariosBoss', '01003E98', '0 *', 3], ['RepNVBoomer', '000FFAE8', 0, 120], ['RepNVBrotherhood', '0011E662', 0, 64],
  ['RepNVCaesarsLegion', '000F43DD', 0, 187], ['RepNVFollowers', '00124AD1', 0, 94], ['RepNVFreeside', '00129A7A', 0, 235],
  ['RepNVGoodsprings', '00104C22', 0, 21], ['RepNVGreatKhans', '0011989B', 0, 94], ['RepNVNCR', '000F43DE', 0, 559],
  ['RepNVNovac', '00129A79', 0, 36], ['RepNVPowderGanger', '001558E6', 0, 68], ['RepNVPrimm', '000F2406', 0, 7],
  ['RepNVTheStrip', '00118F61', 0, 170], ['RepNVWhiteGloveSociety', '00116F16', 0, 74],
];
el('objects').innerHTML = Array.from({ length: 42 }, (_, i) => {
  const r = objects[i];
  const [a, b, c, d] = r || ['', '', '', ''];
  return `<div class="row cols-object${i ? '' : ' sel'}"><span>${r ? '<i>·</i>' : ''}${a}</span><span>${b}</span><span class="c">${c}</span><span class="c">${d}</span><span></span><span></span><span class="c">${r ? 'No' : ''}</span><span></span></div>`;
}).join('');

const cells = [
  ['000OfficeBuilding *', 'Office Building'], ['1ECisternA', 'North Cistern'], ['1ECisternB', 'South Cistern'], ['1ECisternC', 'East Cistern'],
  ['1EEastPumpStation', 'East Pump Station'], ['1EHostetlerHome', 'Hostetler Home'], ['1ENeonSignFactory', "Zapp's Neon Signs"],
  ['1ESteelMill', 'New Vegas Steel'], ['1EUsonianHome01', 'New Vegas Home'], ['1EWestPumpStation', 'West Pump Station'],
  ['2CCampGolfDiningTent', 'Camp Golf Mess Tent'], ['2CCampGolfMisfitsTent', "Misfits' Tent"], ['2CCampGolfResort', 'House Resort'],
];
el('cells').innerHTML = cells.map(([a, b], i) =>
  `<div class="row cols-cell${i ? '' : ' sel'}"><span>${a}</span><span></span><span>${b}</span><span>Interior</span></div>`).join('');

const refs = ['NavMesh (9 Triangles) *', 'FacHallBig1WayExBig01 *', 'FacHallBig1WayHalf01 *', 'FacHallBig1WayHalf01 *', 'FacHallBig1WayHalf01 *',
  'FacHallBig1WayHalf01 *', 'FacHallBig1WayHalfExSm01 *', 'FacHallBig1WayHalfExSm01 *', 'FacHallBig3Way01 *', 'FacHallBigEnd01 *', 'FacHallBigEnd01 *'];
el('refs').innerHTML = refs.map((name, i) =>
  `<div class="row cols-refs"><span><svg viewBox="0 0 17 17">${i ? '<use href="#house"/>' : ''}</svg>${name}</span><span></span><span class="c">${i ? 'Static' : 'NavMe...'}</span><span class="c">${i ? '' : '-'}</span><span class="c">${i ? '' : '-'}</span></div>`).join('');
```
